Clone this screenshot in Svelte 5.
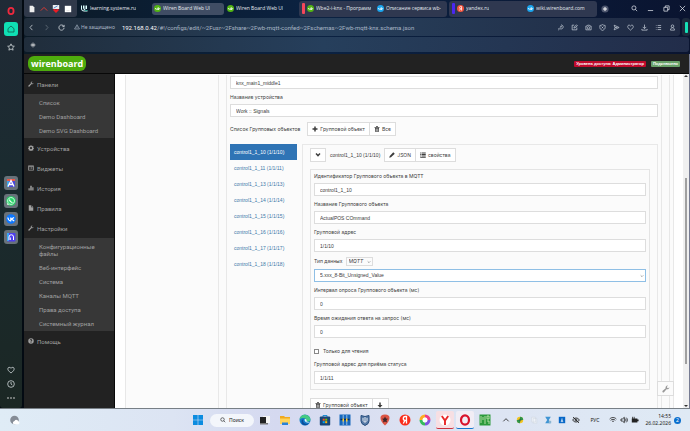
<script>
	const line = {
		home: "M3 11 12 3l9 8v10H3z",
		star: "M12 2.5 15 9l7 .8-5.2 4.8L18.3 21.5 12 18l-6.3 3.5 1.5-6.9L2 9.8 9 9z",
		heart: "M12 21C5 15.5 2.5 12.5 2.5 8.5 2.5 3.5 9 2 12 7c3-5 9.5-3.5 9.5 1.5 0 4-2.5 7-9.5 12.5z",
		clock: "M12 2a10 10 0 1 0 0 20 10 10 0 0 0 0-20zM12 6v6l4 3",
		back: "M15 3 7 12l8 9",
		forward: "M9 3l8 9-8 9",
		reload: "M20 8A9 9 0 1 0 21 13M21 3v6h-6",
		warning: "M12 3 22 20H2zM12 9v6M12 17v1",
		magnify: "M10 3a7 7 0 1 0 0 14 7 7 0 0 0 0-14zM15 15l6 6",
		translate: "M14 3a7 7 0 1 1-4 12.7L4 21M8 13l-3 3M11 8h6M11 11h4",
		edit: "M11 4H4v16h16v-8M10 14l1-4 8-7 3 3-8 7z",
		camera: "M3 7h4l2-3h6l2 3h4v13H3zM12 9a4 4 0 1 0 0 8 4 4 0 0 0 0-8z",
		shield: "M12 2c3 2 6 3 9 3v7c0 5-4 8-9 10-5-2-9-5-9-10V5c3 0 6-1 9-3zM9 9l6 6M15 9l-6 6",
		flow: "M4 4l17 8-17 8 3-8zM7 12h8",
		download: "M12 2v13M6 10l6 6 6-6M3 17v4h18v-4",
		list: "M3 5h2M9 5h12M3 12h2M9 12h12M3 19h2M9 19h12",
		user: "M12 3a4.5 4.5 0 1 0 0 9 4.5 4.5 0 0 0 0-9zM5 21c0-11 14-11 14 0z",
		minimize: "M3 19h18",
		restore: "M3 8h13v13H3zM8 8V3h13v13h-5",
		close: "M3 3l18 18M21 3 3 21",
		down: "M4 8l8 8 8-8",
		up: "M4 16l8-8 8 8",
		cube: "M12 3l4 4-4 4-4-4zM12 13l4 4-4 4-4-4zM3 12l4-4 4 4-4 4zM13 12l4-4 4 4-4 4z",
		wifi: "M2 9c6-6 14-6 20 0M5 13c4-4 10-4 14 0M9 17c2-2 4-2 6 0",
		volume: "M3 9h4l6-5v16l-6-5H3zM16 8c2 2 2 6 0 8M19 5c4 4 4 10 0 14",
		hidden: "M2 12c4-8 16-8 20 0-4 8-16 8-20 0zM12 9a3 3 0 1 0 0 6 3 3 0 0 0 0-6zM3 3l18 18",
	}

	const solid = {
		wrench: "M22 6.5a6 6 0 0 1-8.5 6L6 21.5a2.7 2.7 0 0 1-4-4L11 10a6 6 0 0 1 7-8l-3.5 3.5 1 3 3 1z",
		gear: "M10 1h4l.6 3.2 2 .8 2.7-1.8 2.8 2.8L20.3 8.7l.8 2L24 11v3.5l-3 .7-.8 2 1.8 2.7-2.8 2.6-2.7-1.8-2 .8L14 24h-4l-.6-2.5-2-.8-2.7 1.8L2 19.9l1.7-2.7-.8-2L0 14.5V11l2.9-.5.8-2L2 6l2.7-2.8L7.4 5l2-.8zM12 8a4.3 4.3 0 1 0 0 8.6A4.3 4.3 0 0 0 12 8z",
		widget: "M1 2h22v20H1zM4 7v12h16V7zM6 9h3v2H6zM11 9h7v2h-7zM6 14h3v2H6zM11 14h7v2h-7z",
		chart: "M2 13h5v9H2zM9 3h6v19H9zM17 9h5v13h-5z",
		file: "M3 1h9v8h9v14H3zM14 1l7 6h-7z",
		help: "M12 1a11 11 0 1 0 0 22 11 11 0 0 0 0-22zM7 9c0-6 10-6 10 0 0 3-3.5 3-3.5 6h-3c0-4 3-4 3-6 0-2-3-2-3 0zM10.5 16.5h3v3h-3z",
		plus: "M9 2h6v7h7v6h-7v7H9v-7H2V9h7z",
		trash: "M8 1h8v3h6v3H2V4h6zM4 8h16v15H4zM7 10v11h2V10zM11 10v11h2V10zM15 10v11h2V10z",
		pencil: "M17 1l6 6L8 21l-7 2 2-7z",
		rows: "M1 2h5v4H1zM8 2h15v4H8zM1 8h5v4H1zM8 8h15v4H8zM1 14h5v4H1zM8 14h15v4H8zM1 20h22v3H1z",
		chevron: "M2 8l4-4 6 6 6-6 4 4-10 11z",
		arrow: "M9 2h6v10h7L12 23 2 12h7z",
	}

	const bars = [
		{ color: null, tabs: [{ icon: "u", title: "learning.systeme.ru" }, { icon: "wb", title: "Wiren Board Web UI", active: true }, { icon: "wb", title: "Wiren Board Web UI" }] },
		{ color: "red", tabs: [{ icon: "wb", title: "Wbe2-i-knx - Программ" }, { icon: "wiki", title: "Описание сервиса wb-" }] },
		{ color: "violet", tabs: [{ icon: "ya", title: "yandex.ru" }, { icon: "wiki", title: "wiki.wirenboard.com" }] },
	]

	const tools = ["translate", "edit", "camera", "shield", "flow", "heart", "download", "list", "user"]

	const menu = [
		{ icon: "wrench", title: "Панели", items: ["Список", "Demo Dashboard", "Demo SVG Dashboard"] },
		{ icon: "gear", title: "Устройства" },
		{ icon: "widget", title: "Виджеты" },
		{ icon: "chart", title: "История" },
		{ icon: "file", title: "Правила" },
		{ icon: "wrench", title: "Настройки", items: ["Конфигурационные файлы", "Веб-интерфейс", "Система", "Каналы MQTT", "Права доступа", "Системный журнал"] },
		{ icon: "help", title: "Помощь" },
	]

	const controls = [10, 11, 13, 14, 15, 16, 17, 18].map((n) => `control1_1_${n} (1/1/${n})`)

	let selected = $state(0)
	let readOnly = $state(false)
	let device = $state({ id: "knx_main1_middle1", name: "Work :: Signals" })
	let object = $state({ id: "control1_1_10", name: "ActualPOS COmmand", address: "1/1/10", poll: "0", timeout: "0", status: "1/1/11" })
</script>

{#snippet stroke(name)}
	<svg class="icon" viewBox="0 0 24 24" fill="none" stroke="currentColor" stroke-width="2.5" aria-hidden="true"><path d={line[name]} /></svg>
{/snippet}

{#snippet glyph(name)}
	<svg class="icon" viewBox="0 0 24 24" fill="currentColor" fill-rule="evenodd" aria-hidden="true"><path d={solid[name]} /></svg>
{/snippet}

{#snippet field(id, label, key)}
	<div class="field">
		<label for={id}>{label}</label>
		<input {id} type="text" bind:value={object[key]} />
	</div>
{/snippet}

{#snippet favicon(kind)}
	<svg class="favicon" viewBox="0 0 14 14" aria-hidden="true">
		{#if kind === "u"}
			<path d="M1 1v7q0 4 5 4h7M5 1v6q0 2 3 2V1M11 1v7" fill="none" stroke="#dff" stroke-width="2" />
			<path d="M8 11h5" stroke="#2a9d8f" stroke-width="2" />
		{:else if kind === "ya"}
			<circle cx="7" cy="7" r="7" fill="#f5533d" />
			<path d="M9 11V3H7.5a2.3 2.3 0 0 0 0 4.6H9M7 7.5 5 11" fill="none" stroke="#fff" stroke-width="1.5" />
		{:else}
			<circle cx="7" cy="7" r="7" fill={kind === "wb" ? "#52b512" : "#1ba5ee"} />
			<path d="M3 6v2l1 1 1.5-1L7 9l1-1V6M8 5v4h2l1.5-1.5L10 6H8" fill="none" stroke="#fff" stroke-width="1.5" />
		{/if}
	</svg>
{/snippet}

<div class="desktop">
	<div class="browser">
		<aside class="rail">
			<button class="rail-btn" aria-label="Opera">
				<svg viewBox="0 0 14 14"><ellipse cx="7" cy="7" rx="2.6" ry="3.2" fill="none" stroke="#f0293e" stroke-width="1.8" /></svg>
			</button>
			<button class="rail-btn home" aria-label="Домой">{@render stroke("home")}</button>
			<button class="rail-btn" aria-label="Закладки">{@render stroke("star")}</button>
			<div class="rail-apps">
				<button class="rail-btn app" aria-label="Aria">
					<svg viewBox="0 0 14 14"><rect x="3" y="3" width="8" height="8" fill="#4a49d8" /><path d="M3 3h8v2H3z" fill="#e8594a" /><path d="M3 5h2v6H3z" fill="#3ea3e8" /><path d="M4 10.5 7 4.5l3 6M5 8.5h4" fill="none" stroke="#fff" stroke-width="1.3" /></svg>
				</button>
				<button class="rail-btn app" aria-label="WhatsApp">
					<svg viewBox="0 0 14 14"><circle cx="7" cy="7" r="4.8" fill="#25d366" /><path d="M3.5 10.5 4 8.5a3.4 3.4 0 1 1 1.5 1.5z" fill="none" stroke="#fff" stroke-width=".8" /><path d="M5.5 5.5q.2 2.5 3 3" fill="none" stroke="#fff" stroke-width="1.1" /></svg>
				</button>
				<button class="rail-btn app" aria-label="ВКонтакте">
					<svg viewBox="0 0 14 14"><circle cx="7" cy="7" r="4.8" fill="#0a77ff" /><path d="M3.8 5.5Q4.5 9 6.8 8.8V5.5M10 5.5 7.5 7.1 10.2 8.9" fill="none" stroke="#fff" stroke-width="1.2" /></svg>
				</button>
				<button class="rail-btn app" aria-label="Плеер">
					<svg viewBox="0 0 14 14"><rect x="3" y="3" width="8.5" height="8.5" rx="1" fill="#4d3df0" /><path d="M3 3h2v8H3z" fill="#39a5f5" /><path d="M5 10V7a2 2 0 0 1 4.5 0v3M6.3 7.5V10" fill="none" stroke="#fff" stroke-width="1" /></svg>
				</button>
			</div>
			<div class="rail-bottom">
				<button class="rail-btn" aria-label="Избранное">{@render stroke("heart")}</button>
				<button class="rail-btn" aria-label="История">{@render stroke("clock")}</button>
				<button class="rail-btn" aria-label="Ещё">
					<svg viewBox="0 0 14 14" fill="#ddd"><circle cx="4" cy="7" r=".8" /><circle cx="7" cy="7" r=".8" /><circle cx="10" cy="7" r=".8" /></svg>
				</button>
			</div>
		</aside>

		<div class="window">
			<div class="tabbar">
				<div class="pinned">
					<svg viewBox="0 0 10 10"><path d="M2 1h4l2 2v6H2z" fill="#eee" /></svg>
					<svg viewBox="0 0 10 10"><path d="M1 7l4-4 4 4" fill="none" stroke="#e23b34" stroke-width="1.2" /></svg>
					<svg viewBox="0 0 10 10"><path d="M1 0h8v5H1z" fill="#eee" /><path d="M2 4l5-3" stroke="#2d73c9" /><path d="M5 10 1.5 6.5c0-2 2.5-2 3.5-.5 1-1.5 3.5-1.5 3.5.5z" fill="#ed1c24" /></svg>
					<svg viewBox="0 0 10 10"><path d="M1 1h8v8H1z" fill="#fff" /><path d="M3 7h4" stroke="#ccc" stroke-width=".7" /></svg>
				</div>
				{#each bars as bar}
					<div class="group {bar.color ? 'grouped' : ''}">
						{#if bar.color}<span class="mark {bar.color}"></span>{/if}
						{#each bar.tabs as tab}
							<button class="tab" class:active={tab.active}>
								{@render favicon(tab.icon)}
								<span>{tab.title}</span>
							</button>
						{/each}
					</div>
				{/each}
				<button class="new-tab" aria-label="Новая вкладка">
					<svg viewBox="0 0 10 10"><circle cx="5" cy="5" r="4.5" fill="#4d566e" /><path d="M5 2.5v5M2.5 5h5" stroke="#fff" stroke-width="1.2" /></svg>
				</button>
				<div class="window-controls">
					<button aria-label="Поиск">{@render stroke("magnify")}</button>
					<button aria-label="Свернуть">{@render stroke("minimize")}</button>
					<button aria-label="Развернуть">{@render stroke("restore")}</button>
					<button aria-label="Закрыть">{@render stroke("close")}</button>
				</div>
			</div>

			<div class="address-row">
				<div class="address">
					<div class="nav-buttons">
						<button aria-label="Назад">{@render stroke("back")}</button>
						<button aria-label="Вперёд" class="dim">{@render stroke("forward")}</button>
						<button aria-label="Обновить">{@render stroke("reload")}</button>
					</div>
					<span class="insecure">{@render stroke("warning")} Не защищено</span>
					<span class="url"><b>192.168.0.42</b>/#!/configs/edit/~2Fusr~2Fshare~2Fwb-mqtt-confed~2Fschemas~2Fwb-mqtt-knx.schema.json</span>
					<div class="tools">
						{#each tools as tool}
							<button aria-label={tool}>{@render stroke(tool)}</button>
						{/each}
					</div>
				</div>
				<div class="easy"><span></span></div>
			</div>
			<div class="bookmarks">{@render stroke("cube")}</div>

			<div class="page">
				<header>
					<a class="logo" href="#home">wirenboard</a>
					<div class="badges">
						<span class="badge danger">Уровень доступа: Администратор</span>
						<span class="badge success">Подключено</span>
					</div>
				</header>

				<div class="body">
					<nav>
						{#each menu as section}
							<a class="section" href="#{section.icon}">{@render glyph(section.icon)}{section.title}</a>
							{#if section.items}
								<div class="submenu">
									{#each section.items as item}
										<a href="#{section.icon}">{item}</a>
									{/each}
								</div>
							{/if}
						{/each}
					</nav>

					<main>
						<div class="level outer">
							<div class="level middle">
								<div class="level inner">
									<input type="text" aria-label="Идентификатор устройства" bind:value={device.id} />
									<div class="field device">
										<label for="device-name">Название устройства</label>
										<input id="device-name" type="text" bind:value={device.name} />
									</div>

									<div class="toolbar">
										<span>Список Групповых объектов</span>
										<div class="btn-group">
											<button>{@render glyph("plus")} Групповой объект</button>
											<button>{@render glyph("trash")} Все</button>
										</div>
									</div>

									<div class="split">
										<div class="pills">
											{#each controls as control, i}
												<button class:current={selected === i} onclick={() => (selected = i)}>{control}</button>
											{/each}
										</div>

										<div class="object">
											<div class="object-head">
												<div class="btn-group"><button class="square" aria-label="Свернуть объект">{@render glyph("chevron")}</button></div>
												<span class="object-name">{controls[selected]}</span>
												<div class="btn-group">
													<button>{@render glyph("pencil")} JSON</button>
													<button>{@render glyph("rows")} свойства</button>
												</div>
											</div>

											<div class="well">
												{@render field("obj-id", "Идентификатор Группового объекта в MQTT", "id")}
												{@render field("obj-name", "Название Группового объекта", "name")}
												{@render field("obj-address", "Групповой адрес", "address")}
												<div class="field">
													<div class="type-label">
														<label for="obj-type">Тип данных</label>
														<span class="select small">
															<select aria-label="Формат"><option>MQTT</option></select>
															{@render stroke("down")}
														</span>
													</div>
													<span class="select wide">
														<select id="obj-type"><option>5.xxx_8-Bit_Unsigned_Value</option></select>
														{@render stroke("down")}
													</span>
												</div>
												{@render field("obj-poll", "Интервал опроса Группового объекта (мс)", "poll")}
												{@render field("obj-timeout", "Время ожидания ответа на запрос (мс)", "timeout")}
												<label class="check"><input type="checkbox" bind:checked={readOnly} /> Только для чтения</label>
												{@render field("obj-status", "Групповой адрес для приёма статуса", "status")}
											</div>

											<div class="btn-group footer">
												<button>{@render glyph("trash")} Групповой объект</button>
												<button class="square" aria-label="Вниз">{@render glyph("arrow")}</button>
											</div>
										</div>
									</div>
								</div>
							</div>
						</div>
						<button class="settings" aria-label="Настройки редактора">{@render glyph("wrench")}</button>
					</main>

					<div class="scrollbar">
						<svg viewBox="0 0 6 4"><path d="M1 3l2-2 2 2z" fill="#333" /></svg>
						<div class="track"><span></span></div>
						<svg viewBox="0 0 6 4"><path d="M1 1l2 2 2-2z" fill="#333" /></svg>
					</div>
				</div>
			</div>
		</div>
	</div>

	<footer class="taskbar">
		<svg class="weather" viewBox="0 0 12 12"><circle cx="6" cy="5.5" r="4.7" fill="#858c96" /><path d="M5 10a2 2 0 0 1 1-3.5A2.5 2.5 0 0 1 10.5 7a1.7 1.7 0 0 1 0 3z" fill="#fff" /></svg>

		<div class="apps">
			<svg viewBox="0 0 12 12"><path d="M1 1h4.7v4.7H1zM6.3 1H11v4.7H6.3zM1 6.3h4.7V11H1zM6.3 6.3H11V11H6.3z" fill="#0c8ce0" /></svg>
			<button class="search">{@render stroke("magnify")} Поиск</button>
			<svg viewBox="0 0 12 12"><path d="M4 2h7v7H4z" fill="#f5f5f5" /><path d="M1 3h6v6H1z" fill="#222" /><path d="M1 9h8v1.5H1z" fill="#777" /></svg>
			<svg viewBox="0 0 12 12"><path d="M1 2h4l1 1h5v7H1z" fill="#f0aa20" /><path d="M1 4.5h10V10H1z" fill="#ffd45a" /><path d="M3 8.5h6V11H3z" fill="#2a82d6" /></svg>
			<svg viewBox="0 0 12 12"><circle cx="6" cy="6" r="5.5" fill="#147bc8" /><path d="M.6 5.5C1 1 7-1 10.5 3c2 3 .5 5-3 4.5C8 4 4 3 .6 5.5z" fill="#44ca83" /><path d="M4.5 5.5C3 8 6 11 9.5 9.5 8 12 3 12 2.5 8c0-2 .8-2.5 2-2.5z" fill="#0c4d99" /><path d="M5.5 6c0-2 3-1 2 1.5l3.5.8C9 9 6 8.5 5.5 6z" fill="#e9f4fa" /></svg>
			<svg viewBox="0 0 12 12"><path d="M4 3V1.500h4V3" fill="none" stroke="#1d8fd6" /><rect x=".8" y="2.5" width="10.4" height="9" rx="1" fill="#174679" /><path d="M3.7 4.7h2v2h-2z" fill="#f35325" /><path d="M6.2 4.7h2v2h-2z" fill="#81bc06" /><path d="M3.7 7.2h2v2h-2z" fill="#05a6f0" /><path d="M6.2 7.2h2v2h-2z" fill="#ffba08" /></svg>
			<svg viewBox="0 0 12 12"><path d="M.5.5h11v11H.5z" fill="#1768bd" /><path d="M4.2 1v10M7.800 1v10" stroke="#d4e2ef" stroke-width=".7" /><path d="M1.500 5.500h9" stroke="#0b2d60" stroke-width="1.500" /><path d="M3.500 4.500H5v3H3.500zM7 4.500h1.500v3H7z" fill="#f4ce3b" /></svg>
			<svg viewBox="0 0 12 12"><path d="M2 1.5 6 2.5l4-1V7q0 3-4 4.5Q2 10 2 7z" fill="#5a7ca8" stroke="#264d7d" /><path d="M4 4v2.5l2 2 2-2V4M6 3v5" fill="none" stroke="#fff" stroke-width=".8" /></svg>
			<svg viewBox="0 0 12 12"><path d="M6 .5c7 0 5 7 0 11C1 7.5-1 .5 6 .5z" fill="#dc5545" /><path d="M6 2.5 7 4.5l2 .3-1.5 1.5.5 2.2-2-1-2 1 .5-2.2L3 4.8l2-.3z" fill="#3b262a" /></svg>
			<svg viewBox="0 0 12 12"><circle cx="6" cy="6" r="5.5" fill="#fa2e1c" /><path d="M7.5 9.5v-7H6.3a2 2 0 0 0 0 4h1.2M5.8 6.5 4.3 9.5" fill="none" stroke="#fff" stroke-width="1.3" /></svg>
			<svg viewBox="0 0 12 12" fill="none" stroke-width="3"><path d="M6 2a4 4 0 0 1 4 4" stroke="#f13c86" /><path d="M10 6a4 4 0 0 1-4 4" stroke="#8153e0" /><path d="M6 10a4 4 0 0 1-4-4" stroke="#36bc5b" /><path d="M2 6a4 4 0 0 1 4-4" stroke="#ffad21" /><circle cx="6" cy="6" r="2.4" fill="#fff" stroke="none" /></svg>
			<span class="running yandex"><svg viewBox="0 0 12 12"><circle cx="6" cy="6" r="5.5" fill="#fff" /><path d="M2.8 2 6 6.5 9.2 2M6 6v5" fill="none" stroke="#e92929" stroke-width="1.9" /></svg></span>
			<span class="running opera"><svg viewBox="0 0 12 12"><ellipse cx="6" cy="6" rx="4" ry="4.7" fill="none" stroke="#d9132c" stroke-width="2.2" /></svg></span>
			<span class="running"><svg viewBox="0 0 12 12"><path d="M.5.5h11v11H.5z" fill="#2c9a3c" /><path d="M2 2v7M4 3v3M6 2v8M8 2h2v3H8zM8 7h2v3" fill="none" stroke="#d2f0ba" stroke-width=".8" /></svg></span>
		</div>

		<div class="tray">
			{@render stroke("up")}
			<svg viewBox="0 0 10 10"><circle cx="5" cy="5" r="4" fill="#f3c623" /><path d="M5 5H1a4 4 0 0 0 4 4zM5 5h4a4 4 0 0 0-4-4z" fill="#31984c" /><path d="M5 3v4M3 5h4" stroke="#2a6130" /></svg>
			<svg viewBox="0 0 10 10"><path d="M2 1.5h5v6H2zM4 3h4.5v6H4z" fill="#eef2f8" stroke="#cbd3de" stroke-width=".6" /></svg>
			<svg viewBox="0 0 10 10"><path d="M1.5 1h7L6 5l2.500 4h-7L4 5z" fill="#3f94d3" /><path d="M6 6h3v3H6z" fill="#8db6d1" /></svg>
			<svg viewBox="0 0 10 10"><path d="M1 1h8v8H1z" fill="#0667c7" /><path d="M5 3v3M3.5 7h3M4 5l1 1 1-1" fill="none" stroke="#fff" stroke-width=".9" /></svg>
			{@render stroke("hidden")}
			<span class="lang">РУС</span>
			<div class="status">
				{@render stroke("wifi")}
				{@render stroke("volume")}
				<svg viewBox="0 0 10 10"><path d="M1 3h7v5H1zM8 4.5h1.500v2H8z" fill="#222" /><path d="M2 1v4M4 1v3" stroke="#222" /></svg>
			</div>
			<div class="time"><span>14:55</span><span>26.02.2026</span></div>
			<span class="count">2</span>
		</div>
	</footer>
</div>

<style>
	:global(body) {
		margin: 0;
	}

	.desktop {
		height: 100vh;
		display: flex;
		flex-direction: column;
		font-family: Inter, "Liberation Sans", sans-serif;
		font-size: 5px;
		line-height: 9px;
		color: #3c3c3c;
		background: #030a12;
		overflow: hidden;
	}

	.desktop * {
		box-sizing: border-box;
	}

	button, input, select {
		font: inherit;
		color: inherit;
		margin: 0;
		padding: 0;
		border: none;
		background: none;
	}

	a {
		color: inherit;
		text-decoration: none;
	}

	svg {
		display: block;
		flex: none;
	}

	.icon {
		width: 6px;
		height: 6px;
	}

	.browser {
		flex: 1;
		min-height: 0;
		display: flex;
		gap: 2px;
		border-bottom: 1px solid #777f86;
	}

	/* Opera sidebar */
	.rail {
		width: 22px;
		flex: none;
		display: flex;
		flex-direction: column;
		align-items: center;
		gap: 4px;
		padding: 4px 0 3px;
		background: linear-gradient(#202a36, #1b2b30 40%, #1b2724);
		color: #c9d0d2;
		border-radius: 0 0 3px 3px;
	}

	.rail-btn {
		width: 14px;
		height: 14px;
		flex: none;
		display: flex;
		align-items: center;
		justify-content: center;
		border-radius: 3px;
	}

	.rail-btn > svg {
		width: 14px;
		height: 14px;
	}

	.rail-btn > .icon {
		width: 8px;
		height: 8px;
	}

	.rail-btn.home {
		background: #0fe0b4;
		color: #12604f;
	}

	.rail-btn.app {
		background: #68727a;
	}

	.rail-apps {
		display: flex;
		flex-direction: column;
		gap: 4px;
		margin: auto 0;
		padding-top: 2px;
	}

	.rail-bottom {
		display: flex;
		flex-direction: column;
	}

	.window {
		flex: 1;
		min-width: 0;
		display: flex;
		flex-direction: column;
		background: linear-gradient(90deg, #0b1a26, #0b2242 45%, #0a1430);
	}

	.tabbar {
		height: 18px;
		flex: none;
		display: flex;
		align-items: center;
		padding-bottom: 1px;
		font-family: "Open Sans", "Noto Sans", sans-serif;
		color: #e3e8ef;
	}

	.pinned {
		height: 17px;
		display: flex;
		align-items: center;
		gap: 4px;
		padding: 0 5px 0 4px;
		background: #30394a;
		border-radius: 0 0 3px 3px;
	}

	.pinned svg {
		width: 8px;
		height: 8px;
	}

	.pinned, .group {
		margin-right: 2px;
	}

	.group {
		display: flex;
		align-items: center;
		gap: 1px;
		min-width: 0;
	}

	.grouped {
		height: 16px;
		padding: 0 2px 0 3px;
		gap: 0;
		background: #2f3850;
		border-radius: 3px;
	}

	.mark {
		width: 3px;
		height: 11px;
		border-radius: 1px;
		flex: none;
	}

	.mark.red {
		background: #f5475a;
	}

	.mark.violet {
		background: #4a27f0;
	}

	.tab {
		width: 72px;
		min-width: 0;
		height: 12px;
		display: flex;
		align-items: center;
		gap: 2px;
		padding: 0 2px;
		border-radius: 3px;
		overflow: hidden;
		white-space: nowrap;
	}

	.tab.active {
		background: #404d64;
	}

	.grouped .tab {
		width: 70px;
	}

	.tab span {
		overflow: hidden;
	}

	.favicon {
		width: 7px;
		height: 7px;
	}

	.new-tab svg {
		width: 8px;
		height: 8px;
		margin-left: 2px;
	}

	.window-controls {
		display: flex;
		gap: 9px;
		margin-left: auto;
		padding-right: 4px;
	}

	.window-controls .icon {
		width: 7px;
		height: 7px;
	}

	.address-row {
		height: 18px;
		flex: none;
		display: flex;
		gap: 2px;
	}

	.address {
		flex: 1;
		min-width: 0;
		display: flex;
		align-items: center;
		padding: 0 4px;
		border-radius: 3px;
		background: linear-gradient(90deg, #202d3b, #27405c 45%, #202a43);
		color: #a9b6c5;
		font-family: "Noto Sans", "Open Sans", sans-serif;
		white-space: nowrap;
	}

	.nav-buttons {
		display: flex;
		gap: 8px;
		margin-right: 9px;
		color: #e0e6ec;
	}

	.nav-buttons .icon {
		width: 7px;
		height: 7px;
	}

	.dim {
		opacity: 0.4;
	}

	.insecure {
		display: flex;
		align-items: center;
		gap: 1px;
		margin-right: 7px;
	}

	.url {
		font-family: Roboto, sans-serif;
		font-size: 6px;
	}

	.url b {
		font-weight: normal;
		color: #fff;
	}

	.tools {
		display: flex;
		gap: 7px;
		margin-left: auto;
		color: #c5cdd8;
	}

	.tools .icon {
		width: 7px;
		height: 7px;
	}

	.easy {
		width: 8px;
		display: flex;
		align-items: center;
		justify-content: center;
		background: #1d2a3c;
		border-radius: 3px;
	}

	.easy span {
		width: 3px;
		height: 11px;
		border-radius: 1px;
		background: #16e0b8;
	}

	.bookmarks {
		height: 15px;
		flex: none;
		display: flex;
		align-items: center;
		margin: 1px 1px 2px 0;
		padding-left: 6px;
		border-radius: 3px;
		background: linear-gradient(90deg, #202d3b, #263f5c 45%, #222d4a);
		color: #eee;
	}

	.page {
		flex: 1;
		min-height: 0;
		display: flex;
		flex-direction: column;
		background: #222;
		border-right: 1px solid #777c93;
	}

	header {
		height: 20px;
		flex: none;
		display: flex;
		align-items: center;
		justify-content: space-between;
		padding: 0 9px 0 4px;
		border-bottom: 1px solid #080808;
	}

	.logo {
		padding: 0 3px;
		border-radius: 6px;
		background: #4eac0d;
		color: #fff;
		font: bold 9px/15px "Open Sans", sans-serif;
	}

	.badges {
		display: flex;
		gap: 5px;
	}

	.badge {
		padding: 0 2px;
		border-radius: 1px;
		color: #fff;
		font: bold 4px/6px "Liberation Sans", sans-serif;
	}

	.danger {
		background: #c00a2c;
	}

	.success {
		background: #69a169;
	}

	.body {
		flex: 1;
		min-height: 0;
		display: flex;
	}

	nav {
		width: 91px;
		flex: none;
		border-right: 1px solid #080808;
		color: #a0a0a0;
		font-family: Roboto, sans-serif;
		font-size: 6px;
		line-height: 7px;
	}

	.section {
		height: 20px;
		display: flex;
		align-items: center;
		gap: 3px;
		padding-left: 4px;
	}

	.submenu {
		padding: 1px 0;
		background: #373737;
	}

	.submenu a {
		display: block;
		padding: 4px 12px 3px 15px;
	}

	main {
		flex: 1;
		min-width: 0;
		position: relative;
		overflow: hidden;
		padding: 1px 9px 0 10px;
		background: #fff;
	}

	.level {
		background: #fbfbfb;
		border: solid #e8e8e8;
		border-width: 0 1px;
	}

	.outer {
		padding: 0 3px 0 92px;
	}

	.middle {
		padding: 0 7px;
	}

	.inner {
		padding: 1px 3px 20px;
	}

	input[type="text"], .wide select {
		display: block;
		width: 100%;
		height: 13px;
		padding: 0 5px;
		border: 1px solid #ddd;
		background: #fff;
	}

	input[type="text"], .wide select, .pills, .object-name {
		font-family: "Liberation Sans", Arial, sans-serif;
	}

	.field {
		display: flex;
		flex-direction: column;
		gap: 2px;
	}

	.device {
		margin-top: 4px;
	}

	.toolbar {
		display: flex;
		align-items: center;
		gap: 7px;
		margin: 5px 0 8px;
	}

	.btn-group {
		display: flex;
	}

	.btn-group button {
		height: 14px;
		display: flex;
		align-items: center;
		justify-content: center;
		gap: 2px;
		padding: 0 4px;
		border: 1px solid #ddd;
		background: #fff;
		white-space: nowrap;
	}

	.btn-group button + button {
		border-left: none;
	}

	.btn-group .square {
		width: 16px;
	}

	.split {
		display: flex;
		align-items: flex-start;
		gap: 5px;
	}

	.pills {
		width: 67px;
		flex: none;
		display: flex;
		flex-direction: column;
	}

	.pills button {
		height: 16px;
		padding: 0 4px;
		text-align: left;
		white-space: nowrap;
		color: #4179a8;
	}

	.pills .current {
		background: #2f74b5;
		color: #fff;
	}

	.object {
		flex: 1;
		min-width: 0;
		padding: 3px 7px;
		border: 1px solid #e8e8e8;
	}

	.object-head {
		display: flex;
		align-items: center;
		gap: 4px;
		margin-bottom: 7px;
	}

	.well {
		display: flex;
		flex-direction: column;
		gap: 4px;
		padding: 2px 3px 5px;
		border: 1px solid #e4e4e4;
	}

	.type-label {
		height: 11px;
		display: flex;
		align-items: center;
		gap: 3px;
	}

	.select {
		display: flex;
		align-items: center;
		position: relative;
	}

	.select select {
		appearance: none;
	}

	.select .icon {
		position: absolute;
		right: 2px;
		width: 4px;
		height: 4px;
		pointer-events: none;
	}

	.small select {
		height: 9px;
		padding: 0 8px 0 2px;
		border: 1px solid #ddd;
		font-style: italic;
		line-height: 7px;
	}

	.wide select {
		border-color: #8fbfe5;
	}

	.check {
		display: flex;
		align-items: center;
		gap: 4px;
		margin: 5px 0 0;
	}

	.check input {
		appearance: none;
		width: 5px;
		height: 5px;
		border: 1px solid #888;
		background: #fff;
	}

	.check input:checked {
		background: #2f74b5;
	}

	.footer {
		margin-top: 8px;
	}

	.settings {
		position: absolute;
		right: 9px;
		bottom: 12px;
		width: 17px;
		height: 15px;
		display: flex;
		align-items: center;
		justify-content: center;
		border: 1px solid #ddd;
		background: #fbfbfb;
		color: #999;
	}

	.settings .icon {
		width: 8px;
		height: 8px;
	}

	.scrollbar {
		width: 6px;
		flex: none;
		display: flex;
		flex-direction: column;
		background: #f0f0f0;
	}

	.scrollbar svg {
		width: 6px;
		height: 4px;
	}

	.track {
		flex: 1;
		display: flex;
		flex-direction: column;
		justify-content: center;
		align-items: center;
		padding-top: 60px;
	}

	.track span {
		width: 2px;
		height: 70%;
		background: #a0a0a0;
	}

	.taskbar {
		height: 22px;
		flex: none;
		display: grid;
		grid-template-columns: 1fr auto 1fr;
		align-items: center;
		padding: 0 7px 0 0;
		background: linear-gradient(90deg, #dfecf6, #dce4f3 25%, #d5d9f0 40%, #dce2f2 60%, #dfeaf5);
		color: #222;
		font-family: "Noto Sans", sans-serif;
	}

	.weather {
		width: 11px;
		height: 11px;
		margin-left: 9px;
	}

	.apps {
		display: flex;
		align-items: center;
		gap: 8px;
	}

	.apps > svg, .running svg {
		width: 12px;
		height: 12px;
	}

	.search {
		width: 44px;
		height: 13px;
		display: flex;
		align-items: center;
		gap: 3px;
		padding-left: 10px;
		margin: 0 -3px 0 -2px;
		border-radius: 7px;
		background: #f3f6fb;
	}

	.running {
		width: 18px;
		height: 18px;
		display: flex;
		align-items: center;
		justify-content: center;
		margin: 0 -3px;
		border-radius: 2px;
	}

	.yandex {
		background: #f7dfe3;
		border-bottom: 1px solid #cc3340;
	}

	.opera {
		background: #f1edf5;
		border-bottom: 1px solid #1676cf;
	}

	.tray {
		display: flex;
		align-items: center;
		justify-content: flex-end;
		gap: 6px;
		padding-right: 2px;
	}

	.tray svg {
		width: 8px;
		height: 8px;
	}

	.lang {
		margin: 0 4px;
	}

	.status {
		display: flex;
		gap: 3px;
	}

	.time {
		display: flex;
		flex-direction: column;
		text-align: right;
		line-height: 7px;
	}

	.count {
		width: 7px;
		height: 7px;
		margin-left: -3px;
		border-radius: 50%;
		background: #0a6fce;
		color: #fff;
		line-height: 7px;
		text-align: center;
	}
</style>
